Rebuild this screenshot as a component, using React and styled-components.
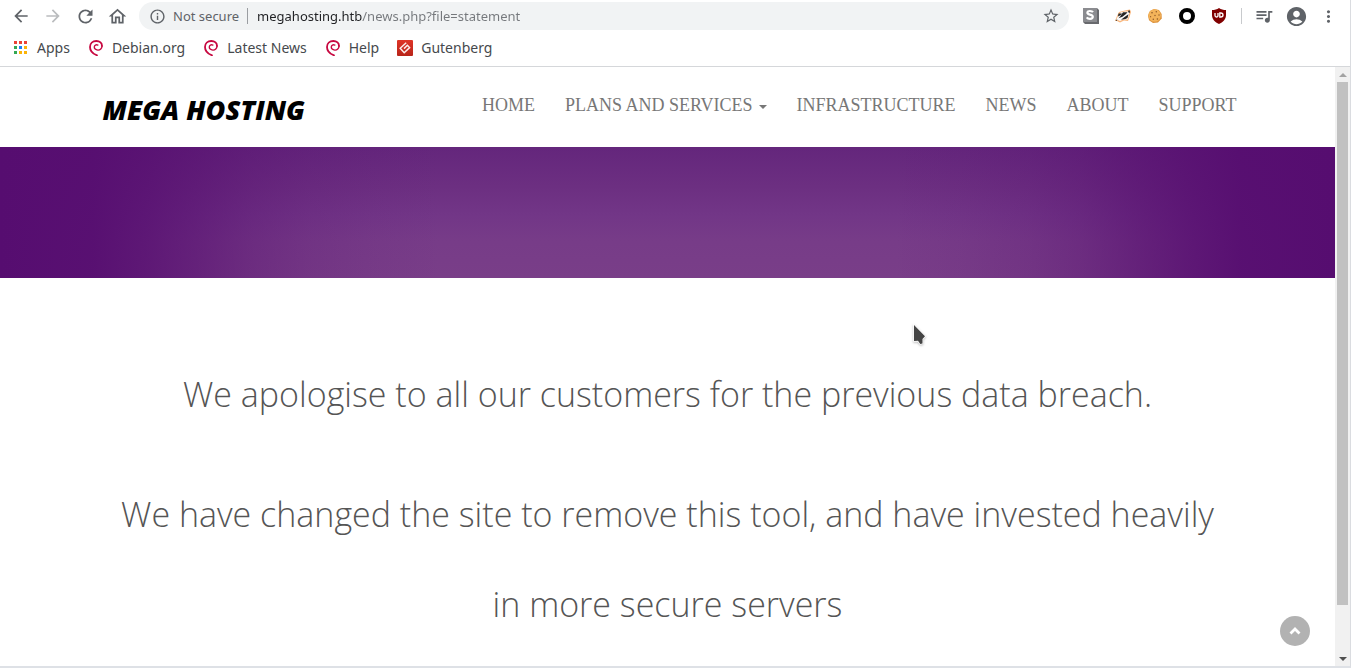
import React from "react";
import styled, { createGlobalStyle, css } from "styled-components";
import {
  MdArrowBack,
  MdArrowForward,
  MdRefresh,
  MdOutlineHome,
  MdInfoOutline,
  MdStarBorder,
  MdQueueMusic,
  MdAccountCircle,
  MdMoreVert,
} from "react-icons/md";

const GlobalStyle = createGlobalStyle`
  *, *::before, *::after { box-sizing: border-box; }
  body { margin: 0; background: #fff; }
  button, input { font: inherit; }
`;

const Window = styled.div`
  display: flex;
  flex-direction: column;
  height: 100vh;
  border-right: 1px solid #dadce0;
  border-bottom: 2px solid #dee1e6;
  font-family: "Noto Sans", sans-serif;
  background: #fff;
`;

const Chrome = styled.header`
  flex: none;
  border-bottom: 1px solid #d5d7da;
`;

const Toolbar = styled.div`
  display: flex;
  align-items: center;
  gap: 12px;
  height: 32px;
  padding: 0 12px 0 11px;
`;

const ToolButton = styled.button`
  display: flex;
  align-items: center;
  justify-content: center;
  flex: none;
  width: 20px;
  height: 20px;
  padding: 0;
  border: 0;
  background: none;
  color: ${(p) => (p.$faded ? "#babcbe" : "#5f6368")};

  svg { flex: none; }
`;

const AddressBar = styled.form`
  display: flex;
  align-items: center;
  flex: 1;
  min-width: 0;
  height: 28px;
  padding: 0 8px;
  border-radius: 14px;
  background: #f1f3f4;
  font-size: 13px;
  color: #5f6368;
`;

const AddressInput = styled.input`
  flex: 1;
  min-width: 0;
  height: 24px;
  margin-left: 9px;
  padding: 0;
  border: 0;
  outline: 0;
  background: linear-gradient(90deg, #202124 105px, #75787c 105px);
  background-clip: text;
  color: transparent;
`;

const SecurityLabel = styled.span`
  margin-left: 6px;
  padding-right: 8px;
  border-right: 1px solid #9a9da1;
  line-height: 16px;
  white-space: nowrap;
`;

const Extensions = styled.div`
  display: flex;
  align-items: center;
  gap: 12px;
`;

const Divider = styled.span`
  width: 1px;
  height: 16px;
  background: #c8cacd;
`;

const Bookmarks = styled.nav`
  display: flex;
  align-items: center;
  gap: 18px;
  height: 34px;
  padding: 0 12px 2px;
`;

const Bookmark = styled.a`
  display: flex;
  align-items: center;
  gap: 8px;
  font-size: 14px;
  line-height: 20px;
  color: #46494d;
  text-decoration: none;
  white-space: nowrap;
`;

const Viewport = styled.div`
  position: relative;
  display: flex;
  flex: 1;
  min-height: 0;
`;

const Page = styled.div`
  flex: 1;
  min-width: 0;
  overflow: hidden;
`;

const SiteHeader = styled.header`
  display: flex;
  justify-content: space-between;
  align-items: flex-start;
  max-width: 1170px;
  min-height: 80px;
  margin: 0 auto;
  padding: 0 16px 0 20px;
`;

const Logo = styled.a`
  padding-top: 26px;
  font: italic 800 27px/34px "Open Sans", sans-serif;
  color: #000;
  text-decoration: none;
  white-space: nowrap;
`;

const SiteNav = styled.nav`
  display: flex;
  gap: 30px;
  padding-top: 28px;
  font: 18px/20px "Liberation Serif", serif;
`;

const navItem = css`
  color: #777;
  text-decoration: none;
  text-transform: uppercase;
  white-space: nowrap;
`;

const NavLink = styled.a`
  ${navItem}
`;

const NavMenuButton = styled.button`
  ${navItem}
  display: flex;
  align-items: center;
  gap: 6px;
  padding: 0;
  border: 0;
  background: none;

  &::after {
    content: "";
    margin-top: 4px;
    border: 4px solid transparent;
    border-top-color: currentColor;
    border-bottom: 0;
  }
`;

/* The glow is the product of two fades: one across, one down from the top. */
const Banner = styled.div`
  height: 131px;
  background:
    linear-gradient(
      90deg,
      #560d70 0%,
      #560d70ee 7%,
      #560d70c4 11%,
      #560d7090 15%,
      #560d7058 19%,
      #560d7030 23%,
      #560d7012 28%,
      #560d7000 33%,
      #560d7000 67%,
      #560d7012 72%,
      #560d7030 77%,
      #560d7058 81%,
      #560d7090 85%,
      #560d70c4 89%,
      #560d70ee 93%,
      #560d70 100%
    ),
    linear-gradient(180deg, #64267c 0%, #6c2f81 30%, #723687 52%, #773c88 72%, #793e88 100%);
`;

const Statement = styled.main`
  max-width: 1140px;
  margin: 0 auto;
  padding: 71px 15px 0;
  text-align: center;
`;

const Paragraph = styled.p`
  margin: 0 0 30px;
  font: 300 34px/90px "Open Sans", sans-serif;
  color: #555;
`;

const ScrollTop = styled.button`
  position: absolute;
  right: 40px;
  bottom: 20px;
  display: flex;
  align-items: center;
  justify-content: center;
  width: 30px;
  height: 30px;
  padding: 0;
  border: 0;
  border-radius: 50%;
  background: #b2b2b2;
`;

const Pointer = styled.svg`
  position: absolute;
  left: 911px;
  top: 256px;
  filter: drop-shadow(0 1px 1px #bbb);
`;

const Scrollbar = styled.div`
  display: flex;
  flex-direction: column;
  flex: none;
  width: 15px;
  background: #f1f1f1;
`;

const ScrollArrow = styled.button`
  display: flex;
  align-items: center;
  justify-content: center;
  flex: none;
  height: 15px;
  padding: 0;
  border: 0;
  background: none;
`;

const ScrollTrack = styled.div`
  flex: 1;
  padding: 0 2px;
`;

const ScrollThumb = styled.div`
  height: 92%;
  background: #c1c1c1;
`;

function AppsIcon() {
  const colors = ["#ea4335", "#ea4335", "#ea4335", "#34a853", "#1a82f7", "#fbb408", "#34a853", "#fbb408", "#fbb408"];
  return (
    <svg width="17" height="16" viewBox="0 0 17 16" aria-hidden="true">
      {colors.map((c, i) => (
        <rect key={i} x={2 + (i % 3) * 5} y={1 + Math.floor(i / 3) * 5} width="3" height="3" fill={c} />
      ))}
    </svg>
  );
}

function DebianIcon() {
  return (
    <svg width="16" height="16" viewBox="0 0 16 16" aria-hidden="true">
      <g fill="none" stroke="#c70840" strokeLinecap="round">
        <path d="M9 15.3C4.8 13.8 2 10.8 2 7 2 3.3 4.7 1 8.3 1 11.9 1 14 3.2 14 5.9" strokeWidth="1.8" />
        <path d="M14 5.9C14 8.6 12.1 10.2 9.8 10.1 7.5 10 6.2 8.6 6.3 7 6.4 5.2 8 4.3 9.9 5.1" strokeWidth="1.4" />
      </g>
    </svg>
  );
}

function GutenbergIcon() {
  return (
    <svg width="16" height="16" viewBox="0 0 16 16" aria-hidden="true">
      <defs>
        <linearGradient id="gutenberg" x1="0" y1="0" x2="0" y2="1">
          <stop offset="0" stopColor="#df3527" />
          <stop offset="1" stopColor="#b82419" />
        </linearGradient>
      </defs>
      <rect width="16" height="16" rx="1" fill="url(#gutenberg)" />
      <path d="M9.2 2.8 3.2 8.3 7.2 12.7 12.6 7.6 10.4 5.3 7 8.6" fill="none" stroke="#fbeeec" strokeWidth="1.5" />
    </svg>
  );
}

function StylusIcon() {
  return (
    <svg width="16" height="16" viewBox="0 0 16 16" aria-hidden="true">
      <path d="M0 0H14L16 2V16H2L0 14Z" fill="#68696d" />
      <path d="M0 0H14V14H0Z" fill="#8b8c90" />
      <path d="M10 4.2C9.3 3.2 8 3 6.9 3 5.4 3 4.4 3.7 4.4 4.8 4.4 7.3 9.8 5.8 9.8 8.8 9.8 10.1 8.6 10.8 7 10.8 5.6 10.8 4.4 10.3 3.7 9.3" fill="none" stroke="#fff" strokeWidth="2.2" />
    </svg>
  );
}

function BadgerIcon() {
  return (
    <svg width="16" height="16" viewBox="0 0 16 16" aria-hidden="true">
      <path d="M0 13 2 8 4 4 8 3 12 2 15 1.5 16 4 14.5 9 13 13 9 12.5 5 14.5 2 13Z" fill="#f9b67c" />
      <path d="M1 12.3 3.5 7 6 4.3 10 3.5 14.5 3.5 14 7 12.5 11.5 8 11.5 5 13 3 12Z" fill="#fafafa" />
      <path d="M3.5 5.5H7L5.5 7.2 3 8.5ZM8 4.2H12.5L11 6 7.5 8.7 3.5 10.3 5.5 8ZM13.5 6.3 12.5 10 10.5 11 6 11.8 9.5 9Z" fill="#242424" />
      <path d="M13 2.8 15 2.5 14.7 5 13.5 4.5ZM.5 12 2.5 11.5 1.5 13Z" fill="#242424" />
    </svg>
  );
}

function CookieIcon() {
  return (
    <svg width="16" height="16" viewBox="0 0 16 16" aria-hidden="true">
      <path d="M7 1 12 2 14.6 6 14.7 10.5 11 14.4 6 15 2 12.3 1 7.5 3 3Z" fill="#dc9038" />
      <circle cx="7.6" cy="7.5" r="6.3" fill="#f3b35a" />
      <g fill="#8c5626">
        <circle cx="5" cy="4.7" r=".8" />
        <circle cx="9.3" cy="3.7" r=".7" />
        <circle cx="12" cy="7" r=".7" />
        <circle cx="8" cy="7.5" r=".7" />
        <circle cx="3.6" cy="8.7" r=".6" />
        <circle cx="6.3" cy="11.3" r=".7" />
        <circle cx="10.4" cy="11" r=".8" />
      </g>
    </svg>
  );
}

function RingIcon() {
  return (
    <svg width="16" height="16" viewBox="0 0 16 16" aria-hidden="true">
      <circle cx="8" cy="8" r="6" fill="#fff" stroke="#000" strokeWidth="4" />
    </svg>
  );
}

function ShieldIcon() {
  return (
    <svg width="16" height="16" viewBox="0 0 16 16" aria-hidden="true">
      <path d="M8 0C6 1.6 3.5 2 1 2V7C1 11.5 4 14 8 16 12 14 15 11.5 15 7V2C12.5 2 10 1.6 8 0Z" fill="#800000" />
      <path d="M4 5V7.5Q4 9 5.5 9 7 9 7 7.5V5M8.8 5V9H9.8Q12 9 12 7 12 5 9.8 5Z" fill="none" stroke="#fff" strokeWidth="1.3" />
    </svg>
  );
}

const extensions = [
  ["Stylus", StylusIcon],
  ["Privacy Badger", BadgerIcon],
  ["Cookies", CookieIcon],
  ["Ring", RingIcon],
  ["uBlock", ShieldIcon],
];

export default function App() {
  return (
    <>
      <GlobalStyle />
      <Window>
        <Chrome>
          <Toolbar>
            <ToolButton aria-label="Back"><MdArrowBack size={20} /></ToolButton>
            <ToolButton aria-label="Forward" $faded><MdArrowForward size={20} /></ToolButton>
            <ToolButton aria-label="Reload"><MdRefresh size={21} /></ToolButton>
            <ToolButton aria-label="Home"><MdOutlineHome size={21} /></ToolButton>
            <AddressBar onSubmit={(e) => e.preventDefault()}>
              <ToolButton type="button" aria-label="Site information"><MdInfoOutline size={17} /></ToolButton>
              <SecurityLabel>Not secure</SecurityLabel>
              <AddressInput aria-label="Address" defaultValue="megahosting.htb/news.php?file=statement" />
              <ToolButton type="button" aria-label="Bookmark this page"><MdStarBorder size={18} /></ToolButton>
            </AddressBar>
            <Extensions>
              {extensions.map(([name, Icon]) => (
                <ToolButton key={name} aria-label={name}><Icon /></ToolButton>
              ))}
              <Divider />
              <ToolButton aria-label="Media"><MdQueueMusic size={20} /></ToolButton>
              <ToolButton aria-label="Profile"><MdAccountCircle size={23} /></ToolButton>
              <ToolButton aria-label="Menu"><MdMoreVert size={19} /></ToolButton>
            </Extensions>
          </Toolbar>
          <Bookmarks aria-label="Bookmarks">
            <Bookmark href="#apps"><AppsIcon />Apps</Bookmark>
            <Bookmark href="#debian"><DebianIcon />Debian.org</Bookmark>
            <Bookmark href="#latest"><DebianIcon />Latest News</Bookmark>
            <Bookmark href="#help"><DebianIcon />Help</Bookmark>
            <Bookmark href="#gutenberg"><GutenbergIcon />Gutenberg</Bookmark>
          </Bookmarks>
        </Chrome>
        <Viewport>
          <Page>
            <SiteHeader>
              <Logo href="#home">MEGA HOSTING</Logo>
              <SiteNav aria-label="Main">
                <NavLink href="#home">Home</NavLink>
                <NavMenuButton>Plans and services</NavMenuButton>
                <NavLink href="#infrastructure">Infrastructure</NavLink>
                <NavLink href="#news">News</NavLink>
                <NavLink href="#about">About</NavLink>
                <NavLink href="#support">Support</NavLink>
              </SiteNav>
            </SiteHeader>
            <Banner />
            <Statement>
              <Paragraph>We apologise to all our customers for the previous data breach.</Paragraph>
              <Paragraph>We have changed the site to remove this tool, and have invested heavily in more secure servers</Paragraph>
            </Statement>
          </Page>
          <Scrollbar>
            <ScrollArrow aria-label="Scroll up">
              <svg width="8" height="4" viewBox="0 0 8 4"><path d="M0 4 4 0 8 4Z" fill="#a3a3a3" /></svg>
            </ScrollArrow>
            <ScrollTrack><ScrollThumb /></ScrollTrack>
            <ScrollArrow aria-label="Scroll down">
              <svg width="8" height="4" viewBox="0 0 8 4"><path d="M0 0H8L4 4Z" fill="#505050" /></svg>
            </ScrollArrow>
          </Scrollbar>
          <ScrollTop aria-label="Back to top">
            <svg width="12" height="8" viewBox="0 0 12 8"><path d="M1.5 6.5 6 2 10.5 6.5" fill="none" stroke="#fff" strokeWidth="2.8" /></svg>
          </ScrollTop>
          <Pointer width="18" height="24" viewBox="0 0 18 24" aria-hidden="true">
            <path d="M3 2V18L7 17.8 9.3 21 11.5 20.4V16L14 13.2Z" fill="#444" stroke="#fff" strokeWidth="1.5" paintOrder="stroke" />
          </Pointer>
        </Viewport>
      </Window>
    </>
  );
}
